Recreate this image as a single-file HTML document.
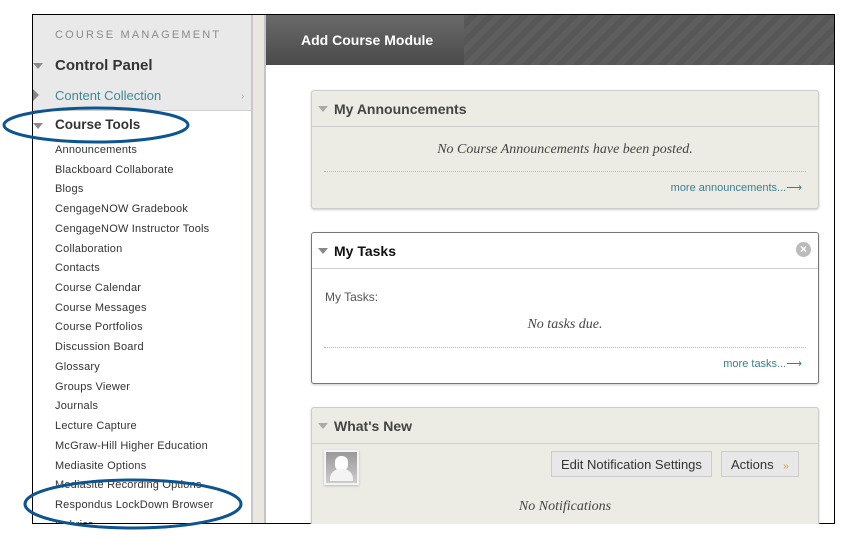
<!DOCTYPE html>
<html><head><meta charset="utf-8"><style>
*{margin:0;padding:0;box-sizing:border-box}
body{width:848px;height:547px;background:#fff;position:relative;overflow:hidden;font-family:"Liberation Sans",Arial,sans-serif}
.frame{position:absolute;left:32px;top:14px;width:803px;height:510px;border:1.5px solid #000;overflow:hidden;background:#fff}
.side{position:absolute;left:0;top:0;width:219px;height:510px;background:#fff}
.sidetop{position:absolute;left:0;top:0;width:219px;height:96px;background:#e9e9e9;border-bottom:1px solid #d0d0d0}
.strip{position:absolute;left:218px;top:0;width:15px;height:510px;background:#e9e7df;border-left:2px solid #c8c8c8;border-right:2px solid #c4c4c4}
.t{position:absolute;white-space:nowrap}
.cm{left:22px;top:14px;font-size:11px;letter-spacing:2.2px;color:#8a8a8a}
.cp{left:22px;top:42px;font-size:15px;font-weight:bold;color:#333}
.cc{left:22px;top:73px;font-size:13px;color:#3a8a98}
.ct{left:22px;top:102px;font-size:13.5px;font-weight:bold;color:#333}
.tri{position:absolute;width:0;height:0;border-left:5px solid transparent;border-right:5px solid transparent;border-top:6px solid #8a8a8a}
.items{position:absolute;left:22px;top:126px;font-size:11px;color:#333;line-height:19.72px;letter-spacing:.2px}
.head{position:absolute;left:233px;top:0;width:570px;height:50px;background:repeating-linear-gradient(135deg,#575757 0 6px,#5e5e5e 6px 12px)}
.tab{position:absolute;left:0;top:0;width:198px;height:50px;background:linear-gradient(#6a6a6a,#4a4a4a);color:#fff;font-weight:bold;font-size:14px;padding:17px 0 0 35px}
.box{position:absolute;left:311px;width:508px;border:1px solid #ccc;border-radius:3px;background:#ecebe4;box-shadow:0 1px 2px #ccc}
.bh{height:36px;border-bottom:1px solid #cfcfcf;font-weight:bold;font-size:14px;color:#444;padding:10px 0 0 22px;position:relative}
.bh .tri{left:6px;top:15px;border-top-color:#aaa}
.em{font-family:"Liberation Serif",serif;font-style:italic;font-size:14px;color:#444;text-align:center}
.dots{border-top:1px dotted #bbb;margin:0 12px}
.more{font-size:11px;color:#3a7f8f;text-align:right;padding-right:16px}
.btn{position:absolute;height:26px;border:1px solid #ccc;background:#e8e8e8;font-size:13px;color:#333;padding:5px 9px}
</style></head><body>
<div class="frame">
 <div class="side">
  <div class="sidetop"></div>
  <div class="t cm">COURSE MANAGEMENT</div>
  <div class="tri" style="left:0;top:48px"></div>
  <div class="t cp">Control Panel</div>
  <div style="position:absolute;left:0;top:74px;width:0;height:0;border-top:6px solid transparent;border-bottom:6px solid transparent;border-left:6px solid #888"></div>
  <div class="t cc">Content Collection</div>
  <div class="t" style="left:208px;top:76px;font-size:10px;color:#aaa">›</div>
  <div class="tri" style="left:0;top:108px"></div>
  <div class="t ct">Course Tools</div>
  <div class="items">Announcements<br>Blackboard Collaborate<br>Blogs<br>CengageNOW Gradebook<br>CengageNOW Instructor Tools<br>Collaboration<br>Contacts<br>Course Calendar<br>Course Messages<br>Course Portfolios<br>Discussion Board<br>Glossary<br>Groups Viewer<br>Journals<br>Lecture Capture<br>McGraw-Hill Higher Education<br>Mediasite Options<br>Mediasite Recording Options<br>Respondus LockDown Browser<br>Rubrics</div>
 </div>
 <div class="strip"></div>
 <div class="head"><div class="tab">Add Course Module</div></div>
</div>
<div class="box" style="top:90px;height:119px">
 <div class="bh"><div class="tri"></div>My Announcements</div>
 <div class="em" style="margin-top:15px">No Course Announcements have been posted.</div>
 <div class="dots" style="margin-top:13px"></div>
 <div class="more" style="margin-top:9px">more announcements...⟶</div>
</div>
<div class="box" style="top:232px;height:152px;background:#fff;border-color:#777">
 <div class="bh" style="color:#111"><div class="tri" style="border-top-color:#888"></div>My Tasks
  <div style="position:absolute;right:7px;top:9px;width:15px;height:15px;border-radius:50%;background:#bbb;color:#fff;font-size:12px;line-height:15px;text-align:center">×</div></div>
 <div style="font-size:12px;color:#555;padding:21px 0 0 13px">My Tasks:</div>
 <div class="em" style="margin-top:13px">No tasks due.</div>
 <div class="dots" style="margin-top:14px"></div>
 <div class="more" style="margin-top:9px">more tasks...⟶</div>
</div>
<div class="box" style="top:407px;height:130px">
 <div class="bh"><div class="tri"></div>What's New</div>
 <div style="position:absolute;left:12px;top:42px;width:35px;height:35px;border:2px solid #f4f4f4;background:linear-gradient(#999,#ccc);box-shadow:0 1px 2px #bbb">
  <div style="position:absolute;left:9px;top:4px;width:13px;height:15px;border-radius:6px;background:#fff"></div>
  <div style="position:absolute;left:4px;top:17px;width:23px;height:12px;border-radius:10px 10px 0 0;background:#f4f4f4"></div></div>
 <div class="btn" style="left:239px;top:43px">Edit Notification Settings</div>
 <div class="btn" style="left:409px;top:43px">Actions <span style="color:#d9a020;font-size:10px;margin-left:6px">»</span></div>
 <div class="em" style="position:absolute;left:0;right:0;top:91px">No Notifications</div>
</div>
<div style="position:absolute;left:32px;top:524px;width:816px;height:23px;background:#fff"></div>
<svg width="848" height="547" style="position:absolute;left:0;top:0">
 <ellipse cx="96" cy="125" rx="92" ry="17" fill="none" stroke="#0d5590" stroke-width="3"/>
 <ellipse cx="133" cy="504" rx="108" ry="24" fill="none" stroke="#0d5590" stroke-width="3"/>
</svg>
</body></html>
